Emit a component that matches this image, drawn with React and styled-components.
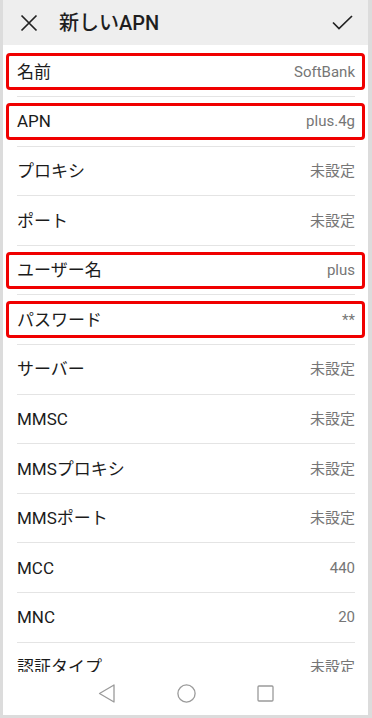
import React from 'react';
import styled, { createGlobalStyle } from 'styled-components';

// Global reset //
const GlobalStyle = createGlobalStyle`
  html, body {
    margin: 0;
    padding: 0;
    background: #ffffff;
  }
  body {
    font-family: Roboto, "Noto Sans CJK JP", sans-serif;
  }
`;

// Custom CSS Component Start //
const Frame = styled.div`
  width: 372px;
  height: 718px;
  box-sizing: border-box;
  border-style: solid;
  border-color: #dcdcdc;
  border-width: 0 4px 3px 3px;
  background: #ffffff;
  display: flex;
  flex-direction: column;
  overflow: hidden;
`;

const Header = styled.header`
  height: 45px;
  flex-shrink: 0;
  background: #eeeeee;
  display: flex;
  align-items: center;
  padding: 0 15px 0 17px;
`;

const IconButton = styled.span`
  display: flex;
  align-items: center;
  justify-content: center;
  color: #222222;
`;

const Title = styled.h1`
  margin: 0 0 0 21px;
  flex: 1;
  font-size: 20px;
  font-weight: 500;
  line-height: 24px;
  color: #1e1e1e;
  font-family: Roboto, "Noto Sans CJK JP", sans-serif;
`;

const List = styled.div`
  flex: 1;
  overflow: hidden;
  padding-top: 2.5px;
`;

const Row = styled.div`
  height: 48.6px;
  display: flex;
  align-items: center;
  padding: 0 3px;
`;

const Field = styled.div`
  flex: 1;
  height: 37px;
  box-sizing: border-box;
  border: 3px solid ${(p) => (p.$marked ? '#f00000' : 'transparent')};
  border-radius: 4px;
  display: flex;
  align-items: center;
  justify-content: space-between;
  padding: 0 7px 0 8px;
`;

const Label = styled.span`
  font-size: 17px;
  line-height: 22px;
  color: #1b1b1b;
`;

const Value = styled.span`
  font-size: 15px;
  line-height: 20px;
  color: #767676;
`;

const Divider = styled.div`
  height: 1px;
  background: #e4e4e4;
  margin: 0 13px 0 14px;
`;

const NavBar = styled.nav`
  height: 43px;
  flex-shrink: 0;
  display: flex;
  align-items: center;
  justify-content: center;
  gap: 61px;
  padding-left: 1px;
`;
// Custom CSS Component End //

const fields = [
  { label: '名前', value: 'SoftBank', marked: true },
  { label: 'APN', value: 'plus.4g', marked: true },
  { label: 'プロキシ', value: '未設定' },
  { label: 'ポート', value: '未設定' },
  { label: 'ユーザー名', value: 'plus', marked: true },
  { label: 'パスワード', value: '**', marked: true },
  { label: 'サーバー', value: '未設定' },
  { label: 'MMSC', value: '未設定' },
  { label: 'MMSプロキシ', value: '未設定' },
  { label: 'MMSポート', value: '未設定' },
  { label: 'MCC', value: '440' },
  { label: 'MNC', value: '20' },
  { label: '認証タイプ', value: '未設定' },
];

function App() {
  return (
    <>
      <GlobalStyle />
      <Frame>
        <Header>
          <IconButton>
            <svg width="18" height="18" viewBox="0 0 18 18" fill="none" stroke="currentColor" strokeWidth="1.7">
              <path d="M1.5 1.5 L16.5 16.5 M16.5 1.5 L1.5 16.5" />
            </svg>
          </IconButton>
          <Title>新しいAPN</Title>
          <IconButton>
            <svg width="21" height="15" viewBox="0 0 21 15" fill="none" stroke="currentColor" strokeWidth="1.7">
              <path d="M1 7.5 L7 13.5 L20 1" />
            </svg>
          </IconButton>
        </Header>
        <List>
          {fields.map((f, i) => (
            <React.Fragment key={f.label}>
              <Row>
                <Field $marked={f.marked}>
                  <Label>{f.label}</Label>
                  <Value>{f.value}</Value>
                </Field>
              </Row>
              {i < fields.length - 1 && <Divider />}
            </React.Fragment>
          ))}
        </List>
        <NavBar>
          <svg width="18" height="19" viewBox="0 0 18 19" fill="none" stroke="#9a9a9a" strokeWidth="1.3">
            <path d="M16 1 L1.5 9.5 L16 18 Z" strokeLinejoin="round" />
          </svg>
          <svg width="19" height="19" viewBox="0 0 19 19" fill="none" stroke="#9a9a9a" strokeWidth="1.3">
            <circle cx="9.5" cy="9.5" r="8.6" />
          </svg>
          <svg width="17" height="17" viewBox="0 0 17 17" fill="none" stroke="#9a9a9a" strokeWidth="1.3">
            <rect x="1" y="1" width="15" height="15" rx="1" />
          </svg>
        </NavBar>
      </Frame>
    </>
  );
}

export default App;
